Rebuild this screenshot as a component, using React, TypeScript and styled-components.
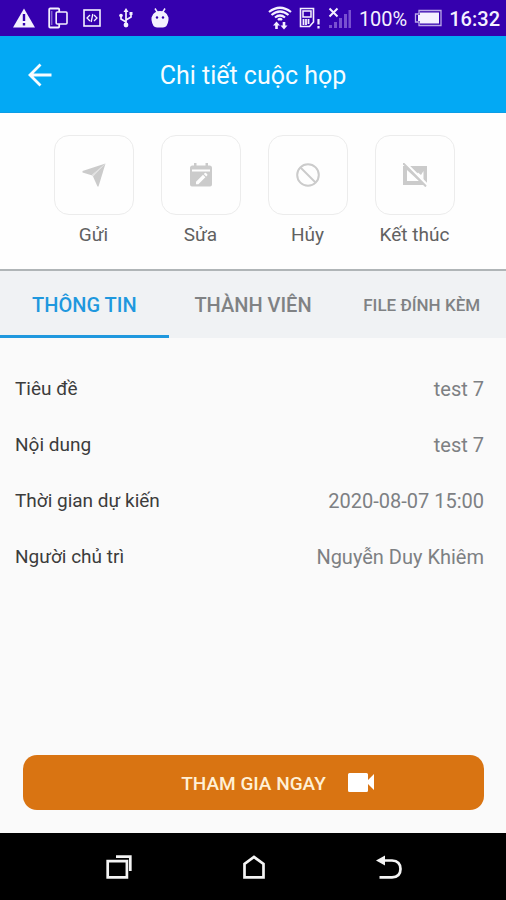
import React, { useState } from 'react';
import styled, { createGlobalStyle } from 'styled-components';

const GlobalStyle = createGlobalStyle`
  * { box-sizing: border-box; }
  body {
    margin: 0;
    font-family: Roboto, "Noto Sans", sans-serif;
    background: #fafafa;
  }
  button { font: inherit; border: 0; padding: 0; background: none; cursor: pointer; }
  svg { display: block; flex: none; }
`;

const Screen = styled.div`
  min-height: 100vh;
  display: flex;
  flex-direction: column;
`;

const StatusBar = styled.div`
  height: 36px;
  flex: none;
  display: flex;
  align-items: center;
  justify-content: space-between;
  padding: 0 6px 0 7px;
  background: #3500ae;
  color: #f4f0ff;
`;

const Notifications = styled.div`
  display: grid;
  grid-template-columns: repeat(5, 34px);
  place-items: center;
`;

const Indicators = styled.div`
  display: flex;
  align-items: center;
  gap: 7px;
`;

const StatusText = styled.span<{ $strong?: boolean }>`
  font-size: 20px;
  line-height: 24px;
  font-weight: ${({ $strong }) => ($strong ? 500 : 400)};
  padding-top: 2px;
`;

const Header = styled.header`
  flex: none;
  display: grid;
  grid-template-columns: 48px 1fr 48px;
  align-items: center;
  height: 77px;
  padding: 2px 16px 0;
  background: #03a9f4;
  border-bottom: 1px solid #0c9de6;
  color: #f6fcff;
`;

const BackButton = styled.button`
  display: grid;
  place-items: center;
  height: 48px;
  color: inherit;
`;

const Title = styled.h1`
  margin: 0;
  padding-top: 2px;
  text-align: center;
  font-size: 25px;
  line-height: 32px;
  font-weight: 400;
`;

const Actions = styled.section`
  flex: none;
  display: grid;
  grid-template-columns: repeat(4, 1fr);
  padding: 22px 38px 22px 40px;
  background: #fefefe;
  border-bottom: 2px solid #b0b5b7;
`;

const Action = styled.button`
  display: flex;
  flex-direction: column;
  align-items: center;
  gap: 8px;
  color: #616161;
  font-size: 19px;
  line-height: 24px;
  white-space: nowrap;
`;

const ActionTile = styled.span`
  display: grid;
  place-items: center;
  width: 80px;
  height: 80px;
  border: 1px solid #ececec;
  border-radius: 15px;
  color: #cbcbcb;
`;

const Tabs = styled.div`
  flex: none;
  display: grid;
  grid-template-columns: repeat(3, 1fr);
  height: 67px;
  background: #f0f2f4;
`;

const Tab = styled.button<{ $active: boolean; $small?: boolean }>`
  border-top: 3px solid transparent;
  border-bottom: 3px solid ${({ $active }) => ($active ? '#1f98de' : 'transparent')};
  color: ${({ $active }) => ($active ? '#1f98de' : '#808284')};
  font-size: ${({ $small }) => ($small ? 17 : 20)}px;
  line-height: 24px;
  font-weight: 500;
`;

const Details = styled.dl`
  flex: 1;
  margin: 0;
  padding: 23px 22px 23px 15px;
`;

const DetailRow = styled.div`
  display: flex;
  align-items: center;
  justify-content: space-between;
  gap: 16px;
  min-height: 56px;
  font-size: 20px;
  line-height: 24px;
`;

const Term = styled.dt`
  color: #3c3c3c;
  font-size: 19px;
`;

const Value = styled.dd`
  margin: 0;
  color: #7d8083;
  text-align: right;
`;

const Footer = styled.div`
  flex: none;
  padding: 0 22px 23px 23px;
`;

const JoinButton = styled.button`
  width: 100%;
  height: 55px;
  display: grid;
  grid-template-columns: 1fr auto 1fr;
  align-items: center;
  border-radius: 14px;
  background: #d97412;
  color: #fff0d6;
  font-size: 19px;
  line-height: 24px;
  font-weight: 500;
`;

const JoinLabel = styled.span`
  grid-column: 2;
  padding-top: 2px;
`;

const JoinIcon = styled.span`
  padding-left: 22px;
  color: #ffffff;
`;

const NavBar = styled.nav`
  flex: none;
  display: grid;
  grid-template-columns: repeat(3, 1fr);
  height: 67px;
  padding: 0 49px 0 51px;
  background: #000;
`;

const NavButton = styled.button`
  display: grid;
  place-items: center;
  color: #f4f4f4;
`;

const WarningIcon = () => (
  <svg width="24" height="20" viewBox="0 0 24 20" aria-hidden="true">
    <path d="M12 .5 23 19.5H1Z" fill="currentColor" />
    <path d="M12 6v7M12 15v2.5" stroke="#3500ae" strokeWidth="2.4" />
  </svg>
);

const PhonesIcon = () => (
  <svg width="20" height="22" viewBox="0 0 20 22" fill="none" stroke="currentColor" aria-hidden="true">
    <rect x="1.200" y="1.500" width="10" height="19" rx="1" strokeWidth="1.800" />
    <path d="M3.800 4v14" strokeWidth="1" opacity=".6" />
    <rect x="8.200" y="5" width="10.800" height="12" rx="1" fill="#3500ae" strokeWidth="1.600" />
  </svg>
);

const DevIcon = () => (
  <svg width="18" height="18" viewBox="0 0 18 18" fill="none" stroke="currentColor" aria-hidden="true">
    <rect x="1" y="1" width="16" height="16" strokeWidth="1.600" />
    <path d="m7 6-3 3 3 3M11 6l3 3-3 3M9.800 5 8.200 13" strokeWidth="1.300" />
  </svg>
);

const UsbIcon = () => (
  <svg width="14" height="20" viewBox="0 0 14 20" fill="none" stroke="currentColor" strokeWidth="1.700" aria-hidden="true">
    <path d="M7 16V3M7 14 2 11V8M7 12l5-3V6" />
    <path d="m7 0 2.500 4h-5ZM10.500 4h3v3h-3Z" fill="currentColor" stroke="none" />
    <circle cx="2" cy="7.500" r="1.800" fill="currentColor" stroke="none" />
    <circle cx="7" cy="17" r="2.400" fill="currentColor" stroke="none" />
  </svg>
);

const RobotIcon = () => (
  <svg width="18" height="20" viewBox="0 0 18 20" aria-hidden="true">
    <path d="m4 .5 2.500 4M14 .5l-2.500 4" stroke="currentColor" strokeWidth="1.500" />
    <path d="M1 8.500Q3 3 9 3t8 5.500l.5 1V12q-1 7.500-5.500 7.500H6Q1.500 19.500.5 12V9.500Z" fill="currentColor" />
    <circle cx="6" cy="9.500" r="1.200" fill="#3500ae" />
    <circle cx="12" cy="9.500" r="1.200" fill="#3500ae" />
  </svg>
);

const WifiIcon = () => (
  <svg width="24" height="24" viewBox="0 0 24 24" fill="none" stroke="currentColor" aria-hidden="true">
    <path d="M1 6Q12-2.500 23 6M3.500 9Q12 2 20.500 9M7 11.500q5-4 10 0M10 14q2-2 4 0" strokeWidth="2.200" />
    <path d="m8.500 15.500 3.500 4h-2.200V23H7.200v-3.500H5ZM16 23.500l-3.500-4h2.200V16h2.600v3.500h2.200Z" fill="currentColor" stroke="none" />
  </svg>
);

const SimIcon = () => (
  <svg width="22" height="22" viewBox="0 0 22 22" fill="none" stroke="currentColor" aria-hidden="true">
    <path d="M1.500 1.500h13V15l-4 4.500h-9Z" strokeWidth="1.600" />
    <path d="M4 4h8v6H4Z" strokeWidth="1.500" />
    <path d="M4.500 12v6M7 12v6M9.500 12v5" strokeWidth="1.800" />
    <path d="M19.500 12v5.500M19.500 19v2.500" strokeWidth="2.200" />
  </svg>
);

const SignalIcon = () => (
  <svg width="24" height="22" viewBox="0 0 24 22" aria-hidden="true">
    <path d="M1 18h3v3H1ZM6 15h3v6H6ZM11 11h3v10h-3ZM16 7h3v14h-3ZM20.500 3H23v18h-2.500Z" fill="#7950d0" />
    <path d="m1.500 1.500 8 8m0-8-8 8" stroke="currentColor" strokeWidth="2" />
  </svg>
);

const BatteryIcon = () => (
  <svg width="28" height="18" viewBox="0 0 28 18" fill="none" stroke="currentColor" aria-hidden="true">
    <path d="M5 1.500h22v15H5V13H1.500V5H5Z" strokeWidth="1.300" opacity=".7" />
    <path d="M6 3.500h19v11H6V12H4V6h2Z" fill="currentColor" stroke="none" />
  </svg>
);

const BackIcon = () => (
  <svg width="24" height="24" viewBox="0 0 24 24" fill="none" stroke="currentColor" strokeWidth="2.800" aria-hidden="true">
    <path d="M23.500 12H2M12.500 1.500 2 12l10.500 10.500" />
  </svg>
);

const SendIcon = () => (
  <svg width="24" height="24" viewBox="0 0 24 24" fill="currentColor" aria-hidden="true">
    <path d="M23.500.5.500 8v1.500l9 2.800Z" />
    <path d="m23.500.500-12.500 13 4.500 10h1Z" />
    <path d="m23.500.500-14 11.800 1.500 1.200Z" opacity=".55" />
  </svg>
);

const EditCalendarIcon = () => (
  <svg width="24" height="26" viewBox="0 0 24 26" aria-hidden="true">
    <path d="M5 1h2.500v2.500h9V1H19v2.500h1.500Q23 3.500 23 6v16.500q0 2-2 2H3q-2 0-2-2V6q0-2.500 2.500-2.500H5Z" fill="currentColor" />
    <path d="M3 7.500h18v2H3Z" fill="#fefefe" />
    <path d="m7 19.800 7-7 2.400 2.400-7 7H7Zm7.800-7.800 1-1q.6-.6 1.200 0l1.200 1.200q.600.600 0 1.200l-1 1Z" fill="#fefefe" />
  </svg>
);

const BanIcon = () => (
  <svg width="24" height="24" viewBox="0 0 24 24" fill="none" stroke="currentColor" strokeWidth="2" aria-hidden="true">
    <circle cx="12" cy="12" r="10.800" />
    <path d="m4.500 4.500 15 15" />
  </svg>
);

const StopShareIcon = () => (
  <svg width="24" height="24" viewBox="0 0 24 24" aria-hidden="true">
    <path d="M0 3h24v19H0Z" fill="currentColor" />
    <path d="M4 7v11h12Z M15 9.500l3 2.500 2.500-4v9L14 11Z" fill="#fefefe" />
    <path d="m1.500-1 24 24" stroke="#fefefe" strokeWidth="2.400" />
    <path d="m0 0 23 23.500" stroke="currentColor" strokeWidth="2" />
  </svg>
);

const VideoIcon = () => (
  <svg width="26" height="19" viewBox="0 0 26 19" fill="currentColor" aria-hidden="true">
    <path d="M1.500 0H18.500Q20 0 20 1.500V7L26 1v16l-6-6v6.500Q20 19 18.500 19H1.500Q0 19 0 17.500v-16Q0 0 1.500 0Z" />
  </svg>
);

const RecentsIcon = () => (
  <svg width="26" height="24" viewBox="0 0 26 24" fill="none" stroke="currentColor" strokeWidth="2.700" aria-hidden="true">
    <path d="M1.700 6.200h19.200v16.100H1.700Z" />
    <path d="M10 1.700h14.300V16" />
  </svg>
);

const HomeIcon = () => (
  <svg width="22" height="24" viewBox="0 0 22 24" fill="none" stroke="currentColor" strokeWidth="2.700" aria-hidden="true">
    <path d="M1.500 22.300V9L11 2l9.500 7v13.300Z" />
  </svg>
);

const ReturnIcon = () => (
  <svg width="26" height="24" viewBox="0 0 26 24" fill="none" stroke="currentColor" strokeWidth="2.700" aria-hidden="true">
    <path d="M5 5.500h11q8.500.500 8.500 8.500T16 22.300H3.500" />
    <path d="M0 5.500 9 .500v10Z" fill="currentColor" stroke="none" />
  </svg>
);

const actions = [
  { label: 'Gửi', icon: <SendIcon /> },
  { label: 'Sửa', icon: <EditCalendarIcon /> },
  { label: 'Hủy', icon: <BanIcon /> },
  { label: 'Kết thúc', icon: <StopShareIcon /> },
];

const tabs = [
  { label: 'THÔNG TIN' },
  { label: 'THÀNH VIÊN' },
  { label: 'FILE ĐÍNH KÈM', small: true },
];

const details = [
  ['Tiêu đề', 'test 7'],
  ['Nội dung', 'test 7'],
  ['Thời gian dự kiến', '2020-08-07 15:00'],
  ['Người chủ trì', 'Nguyễn Duy Khiêm'],
];

export default function App() {
  const [active, setActive] = useState(0);

  return (
    <Screen>
      <GlobalStyle />
      <StatusBar>
        <Notifications>
          <WarningIcon />
          <PhonesIcon />
          <DevIcon />
          <UsbIcon />
          <RobotIcon />
        </Notifications>
        <Indicators>
          <WifiIcon />
          <SimIcon />
          <SignalIcon />
          <StatusText>100%</StatusText>
          <BatteryIcon />
          <StatusText $strong>16:32</StatusText>
        </Indicators>
      </StatusBar>
      <Header>
        <BackButton type="button" aria-label="Quay lại">
          <BackIcon />
        </BackButton>
        <Title>Chi tiết cuộc họp</Title>
      </Header>
      <Actions>
        {actions.map(({ label, icon }) => (
          <Action type="button" key={label}>
            <ActionTile>{icon}</ActionTile>
            {label}
          </Action>
        ))}
      </Actions>
      <Tabs role="tablist">
        {tabs.map(({ label, small }, i) => (
          <Tab
            key={label}
            type="button"
            role="tab"
            aria-selected={i === active}
            $active={i === active}
            $small={small}
            onClick={() => setActive(i)}
          >
            {label}
          </Tab>
        ))}
      </Tabs>
      <Details>
        {details.map(([term, value]) => (
          <DetailRow key={term}>
            <Term>{term}</Term>
            <Value>{value}</Value>
          </DetailRow>
        ))}
      </Details>
      <Footer>
        <JoinButton type="button">
          <JoinLabel>THAM GIA NGAY</JoinLabel>
          <JoinIcon>
            <VideoIcon />
          </JoinIcon>
        </JoinButton>
      </Footer>
      <NavBar>
        <NavButton type="button" aria-label="Gần đây">
          <RecentsIcon />
        </NavButton>
        <NavButton type="button" aria-label="Trang chủ">
          <HomeIcon />
        </NavButton>
        <NavButton type="button" aria-label="Trở về">
          <ReturnIcon />
        </NavButton>
      </NavBar>
    </Screen>
  );
}
